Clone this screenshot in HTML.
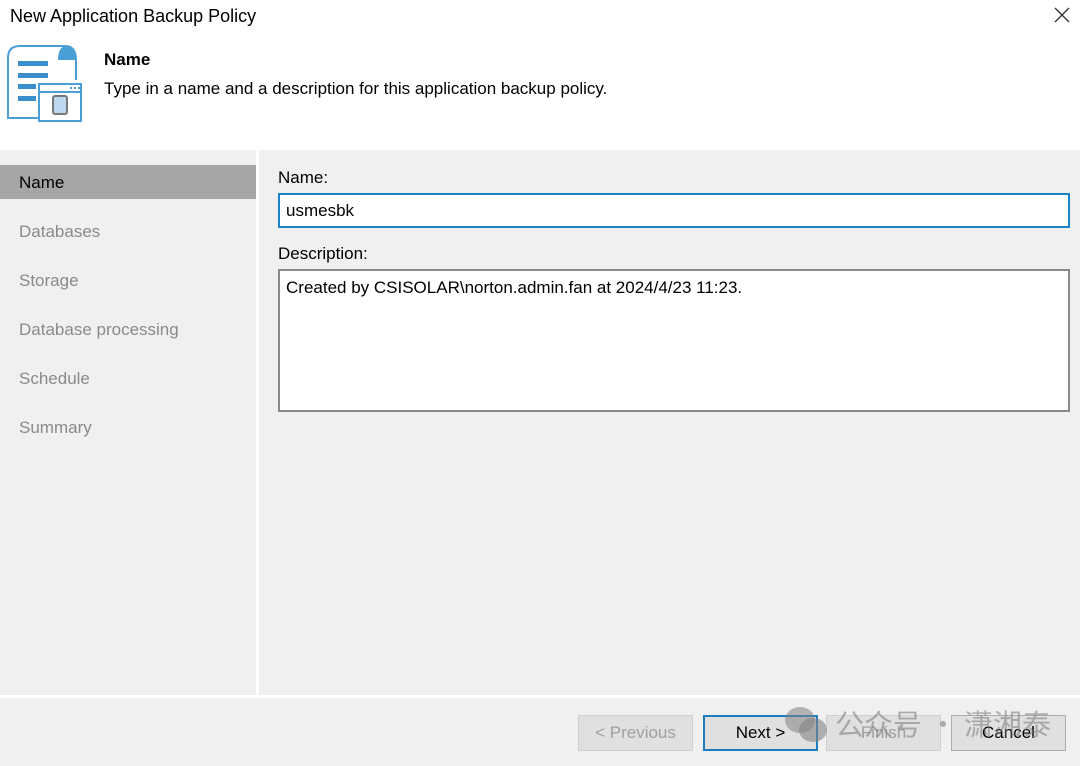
<!DOCTYPE html>
<html><head><style>
*{margin:0;padding:0;box-sizing:border-box}
body{width:1080px;height:766px;background:#f0f0f0;font-family:"Liberation Sans","Noto Sans CJK SC",sans-serif;position:relative;overflow:hidden;color:#000}
.a{position:absolute}
.hdr{left:0;top:0;width:1080px;height:150px;background:#fff}
.nav{left:0;top:150px;width:256px;height:545px;background:#f0f0f0}
.vsep{left:256px;top:150px;width:3px;height:545px;background:#fff}
.hsep{left:0;top:695px;width:1080px;height:3px;background:#fff}
.item{position:absolute;left:19px;font-size:17px;color:#8a8a8a}
.btn{position:absolute;top:715px;height:36px;border:1px solid #cfcfcf;background:#e0e0e0;font-size:17px;text-align:center;line-height:34px;color:#a0a0a0}
</style></head><body>
<div class="a hdr"></div>
<div class="a" style="left:10px;top:6px;font-size:18px">New Application Backup Policy</div>
<svg class="a" style="left:1054px;top:7px" width="16" height="16" viewBox="0 0 16 16"><path d="M1 1L15 15M15 1L1 15" stroke="#333" stroke-width="1.3"/></svg>
<svg class="a" style="left:0;top:30px" width="100" height="100" viewBox="0 0 100 100">
<path d="M8 28 Q8 16 20 16 H65 Q76 16 76 30 V50 M8 28 V88 H38" fill="none" stroke="#4a9fd6" stroke-width="2"/>
<path d="M58 30 Q58 16 67 16 Q76 16 76 30 Z" fill="#4a9fd6"/>
<rect x="18" y="31" width="30" height="5" fill="#3b8fcc"/>
<rect x="18" y="43" width="30" height="5" fill="#3b8fcc"/>
<rect x="18" y="54" width="18" height="5" fill="#3b8fcc"/>
<rect x="18" y="66" width="18" height="5" fill="#3b8fcc"/>
<rect x="39" y="54" width="42" height="37" fill="#fff" stroke="#4a9fd6" stroke-width="2"/>
<rect x="70" y="57" width="2" height="2" fill="#4a9fd6"/><rect x="74" y="57" width="2" height="2" fill="#4a9fd6"/><rect x="78" y="57" width="2" height="2" fill="#4a9fd6"/>
<rect x="39" y="61" width="42" height="2" fill="#4a9fd6"/>
<rect x="53" y="66" width="14" height="18" rx="2" fill="#bcd8f0" stroke="#777" stroke-width="2"/>
</svg>
<div class="a" style="left:104px;top:50px;font-size:17px;font-weight:bold">Name</div>
<div class="a" style="left:104px;top:79px;font-size:17px">Type in a name and a description for this application backup policy.</div>
<div class="a nav"></div>
<div class="a" style="left:0;top:165px;width:256px;height:34px;background:#a6a6a6"></div>
<div class="item" style="top:173px;color:#000">Name</div>
<div class="item" style="top:222px">Databases</div>
<div class="item" style="top:271px">Storage</div>
<div class="item" style="top:320px">Database processing</div>
<div class="item" style="top:369px">Schedule</div>
<div class="item" style="top:418px">Summary</div>
<div class="a vsep"></div>
<div class="a" style="left:278px;top:168px;font-size:17px">Name:</div>
<div class="a" style="left:278px;top:193px;width:792px;height:35px;background:#fff;border:2px solid #1c83c6"></div>
<div class="a" style="left:286px;top:201px;font-size:17px">usmesbk</div>
<div class="a" style="left:278px;top:244px;font-size:17px">Description:</div>
<div class="a" style="left:278px;top:269px;width:792px;height:143px;background:#fff;border:2px solid #8a8a8a"></div>
<div class="a" style="left:286px;top:278px;font-size:17px">Created by CSISOLAR\norton.admin.fan at 2024/4/23 11:23.</div>
<div class="a hsep"></div>
<div class="btn" style="left:578px;width:115px">&lt; Previous</div>
<div class="btn" style="left:703px;width:115px;border:2px solid #1c7ec0;color:#000;line-height:32px">Next &gt;</div>
<div class="btn" style="left:826px;width:115px">Finish</div>
<div class="btn" style="left:951px;width:115px;border-color:#adadad;color:#000">Cancel</div>
<svg class="a" style="left:783px;top:705px" width="46" height="40" viewBox="0 0 46 40"><ellipse cx="17" cy="15" rx="15" ry="13" fill="rgba(130,130,130,0.55)"/><ellipse cx="30" cy="25" rx="14" ry="12" fill="rgba(130,130,130,0.6)"/></svg>
<div class="a" style="left:835px;top:704px;font-size:29px;color:rgba(120,120,120,0.55);font-family:'Noto Sans CJK SC',sans-serif;line-height:38px;white-space:nowrap">公众号 · 潇湘泰</div>
</body></html>
